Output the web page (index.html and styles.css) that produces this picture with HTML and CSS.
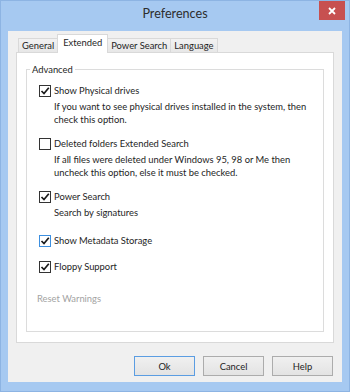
FILE: index.html
```html
<!DOCTYPE html>
<html lang="en">
<head>
  <meta charset="UTF-8">
  <title>Preferences</title>
  <link rel="stylesheet" href="styles.css">
</head>
<body>
  <div class="window">
    <div class="titlebar">
      <span class="title">Preferences</span>
      <span class="close">
        <svg width="8" height="8" viewBox="0 0 8 8"><path d="M1 1 L7 7 M7 1 L1 7" stroke="#fff" stroke-width="1.8"/></svg>
      </span>
    </div>

    <div class="client">
      <div class="tabs">
        <span class="tab">General</span>
        <span class="tab active">Extended</span>
        <span class="tab">Power Search</span>
        <span class="tab">Language</span>
      </div>

      <div class="panel">
        <fieldset class="group">
          <legend>Advanced</legend>

          <div class="option">
            <div class="check">
              <span class="box"><svg width="10" height="10" viewBox="0 0 10 10"><path d="M1.5 5 L4 7.5 L8.8 1.8" fill="none" stroke="#1a1a1a" stroke-width="1.7"/></svg></span>
              Show Physical drives
            </div>
            <p class="desc">If you want to see physical drives installed in the system, then<br>check this option.</p>
          </div>

          <div class="option">
            <div class="check">
              <span class="box"></span>
              Deleted folders Extended Search
            </div>
            <p class="desc">If all files were deleted under Windows 95, 98 or Me then<br>uncheck this option, else it must be checked.</p>
          </div>

          <div class="option spaced">
            <div class="check">
              <span class="box"><svg width="10" height="10" viewBox="0 0 10 10"><path d="M1.5 5 L4 7.5 L8.8 1.8" fill="none" stroke="#1a1a1a" stroke-width="1.7"/></svg></span>
              Power Search
            </div>
            <p class="desc">Search by signatures</p>
          </div>

          <div class="option single">
            <div class="check">
              <span class="box focus"><svg width="10" height="10" viewBox="0 0 10 10"><path d="M1.5 5 L4 7.5 L8.8 1.8" fill="none" stroke="#1a1a1a" stroke-width="1.7"/></svg></span>
              Show Metadata Storage
            </div>
          </div>

          <div class="option single">
            <div class="check">
              <span class="box"><svg width="10" height="10" viewBox="0 0 10 10"><path d="M1.5 5 L4 7.5 L8.8 1.8" fill="none" stroke="#1a1a1a" stroke-width="1.7"/></svg></span>
              Floppy Support
            </div>
          </div>

          <div class="reset">Reset Warnings</div>
        </fieldset>
      </div>

      <div class="buttons">
        <button class="default">Ok</button>
        <button>Cancel</button>
        <button>Help</button>
      </div>
    </div>
  </div>
</body>
</html>
```

FILE: styles.css
```css
body {
  margin: 0;
  font-family: Lato, "Liberation Sans", sans-serif;
  font-size: 9.4px;
  color: #1e1e1e;
}
.window {
  width: 350px;
  height: 392px;
  box-sizing: border-box;
  background-color: #a6c9f1;
  border: 1px solid #8db4e3;
  display: flex;
  flex-direction: column;
}
.titlebar {
  height: 30px;
  display: grid;
  grid-template-columns: 1fr auto 1fr;
}
.title {
  grid-column: 2;
  font-size: 12.6px;
  line-height: 16px;
  padding-top: 5px;
  color: #2d2d2d;
}
.close {
  grid-column: 3;
  justify-self: end;
  width: 26px;
  height: 19px;
  margin-right: 4px;
  background-color: #c75050;
  display: flex;
  align-items: center;
  justify-content: center;
}
.client {
  flex: 1;
  margin: 0 7px 9px 7px;
  background-color: #f0f0f0;
  padding: 3px 8px 6px 8px;
  display: flex;
  flex-direction: column;
}
.tabs {
  display: flex;
  align-items: flex-end;
  padding-left: 2px;
  height: 18px;
}
.tab {
  height: 13px;
  line-height: 14px;
  padding: 0 3px;
  border: 1px solid #d9d9d9;
  border-bottom: none;
  border-right: none;
  background: linear-gradient(#f2f2f2, #e7e7e7);
}
.tab:last-child {
  border-right: 1px solid #d9d9d9;
}
.tab.active {
  height: 18px;
  line-height: 15px;
  padding: 0 5px;
  background: #fff;
  margin-bottom: -1px;
  position: relative;
  border-right: 1px solid #d9d9d9;
}
.tab.active + .tab {
  border-left: none;
}
.panel {
  flex: 1;
  background-color: #fff;
  border: 1px solid #d9d9d9;
  padding: 10px 9px 10px 9px;
  display: flex;
}
.group {
  flex: 1;
  margin: 0;
  min-width: 0;
  border: 1px solid #dcdcdc;
  padding: 8px 0 0 12px;
}
.group legend {
  margin-left: -9px;
  padding: 0 2px;
  line-height: 13px;
}
.option {
  margin-bottom: 11px;
}
.option.spaced {
  margin-bottom: 15px;
}
.option.single {
  margin-bottom: 13px;
}
.check {
  display: flex;
  align-items: center;
  line-height: 13px;
}
.box {
  width: 10px;
  height: 10px;
  border: 1px solid #333;
  background-color: #fff;
  margin-right: 3px;
  display: flex;
  align-items: center;
  justify-content: center;
}
.box.focus {
  border-color: #3c8fe0;
}
.desc {
  margin: 3px 0 0 15px;
  line-height: 13px;
}
.reset {
  margin: 19px 0 0 -2px;
  color: #a3a3a3;
  line-height: 13px;
}
.buttons {
  display: flex;
  justify-content: flex-end;
  gap: 8px;
  margin-top: 13px;
  padding-right: 1px;
}
button {
  width: 61px;
  height: 20px;
  font-family: inherit;
  font-size: 9.4px;
  color: #1e1e1e;
  background: linear-gradient(#f0f0f0, #e3e3e3);
  border: 1px solid #acacac;
  padding: 0;
}
button.default {
  border-color: #5b9de2;
}
```
